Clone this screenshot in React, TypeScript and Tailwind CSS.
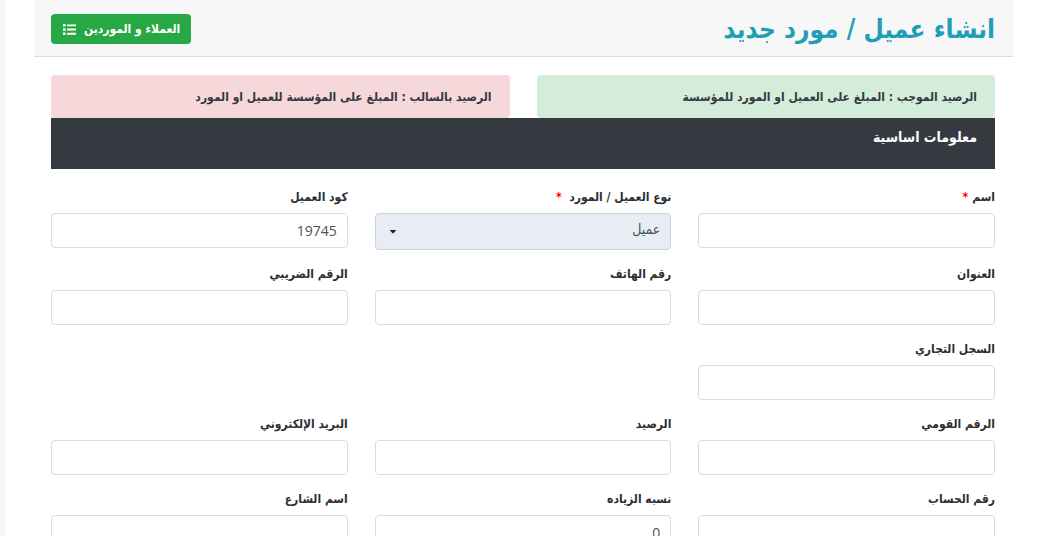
import React from 'react';

type Field = {
  id: string;
  label: string;
  required?: boolean;
  value?: string;
  options?: string[];
};

const rows: Field[][] = [
  [
    { id: 'name', label: 'اسم', required: true },
    { id: 'type', label: 'نوع العميل / المورد ', required: true, options: ['عميل'] },
    { id: 'code', label: 'كود العميل', value: '19745' },
  ],
  [
    { id: 'address', label: 'العنوان' },
    { id: 'phone', label: 'رقم الهاتف' },
    { id: 'tax', label: 'الرقم الضريبي' },
  ],
  [{ id: 'register', label: 'السجل التجاري' }],
  [
    { id: 'national', label: 'الرقم القومي' },
    { id: 'balance', label: 'الرصيد' },
    { id: 'email', label: 'البريد الإلكتروني' },
  ],
  [
    { id: 'account', label: 'رقم الحساب' },
    { id: 'increase', label: 'نسبه الزياده', value: '0' },
    { id: 'street', label: 'اسم الشارع' },
  ],
];

const ListIcon: React.FC = () => (
  <svg viewBox="0 0 13 11" className="h-[11px] w-[13px]" fill="currentColor">
    <rect x="0" y="0" width="2.6" height="2.6" rx="0.5" />
    <rect x="0" y="4.2" width="2.6" height="2.6" rx="0.5" />
    <rect x="0" y="8.4" width="2.6" height="2.6" rx="0.5" />
    <rect x="4" y="0.4" width="9" height="1.9" rx="0.4" />
    <rect x="4" y="4.6" width="9" height="1.9" rx="0.4" />
    <rect x="4" y="8.8" width="9" height="1.9" rx="0.4" />
  </svg>
);

const FormField: React.FC<{ field: Field }> = ({ field }) => (
  <div>
    <label
      htmlFor={field.id}
      className="flex h-6 items-center gap-1 mb-1 text-[12px] font-bold whitespace-pre text-[#2b2f33]"
    >
      <span>{field.label}</span>
      {field.required && <span className="text-[#f00]">*</span>}
    </label>
    {field.options ? (
      <div className="relative">
        <select
          id={field.id}
          className="block w-full h-[37px] appearance-none rounded border border-[#ced4da] bg-[#e8ecf3] px-[10px] pb-1 text-[14px] text-[#495057]"
        >
          {field.options.map((option) => (
            <option key={option}>{option}</option>
          ))}
        </select>
        <svg
          viewBox="0 0 8 4"
          className="pointer-events-none absolute left-[14px] top-[17px] h-1 w-2"
          fill="#212529"
        >
          <path d="M0.6 0h6.8L4 3.7z" />
        </svg>
      </div>
    ) : (
      <input
        id={field.id}
        type="text"
        defaultValue={field.value}
        className="block w-full h-[35px] rounded border border-[#d9dbdd] bg-white px-[10px] font-['Open_Sans','DejaVu_Sans',sans-serif] text-[14px] text-[#495057]"
      />
    )}
  </div>
);

export default function App() {
  return (
    <div dir="rtl" className="flex min-h-screen bg-white font-['DejaVu_Sans_Condensed','DejaVu_Sans',sans-serif]">
      <main className="flex-1 ps-[27px] pe-7">
        {/* Header */}
        <header className="flex h-[57px] items-center justify-between border-b border-[#dcdcdc] bg-[#f7f7f7] ps-[18px] pe-[17px] pt-[2px]">
          <h1 className="text-[26px] font-bold text-[#1f9fb6]">انشاء عميل / مورد جديد</h1>
          <a
            href="#customers"
            className="flex h-[30px] items-center gap-2 rounded bg-[#28a745] ps-[11px] pe-3 text-[12px] font-bold text-white"
          >
            <span>العملاء و الموردين</span>
            <ListIcon />
          </a>
        </header>

        <div className="ps-[18px] pe-[17px] pt-[18px]">
          {/* Balance notes */}
          <div className="grid grid-cols-2 gap-[27px] text-[12px] font-bold text-[#343a40]">
            <p className="flex h-[43px] items-center rounded bg-[#d4edda] px-[18px]">
              الرصيد الموجب : المبلغ على العميل او المورد للمؤسسة
            </p>
            <p className="flex h-[43px] items-center rounded bg-[#f6d7da] px-[18px]">
              الرصيد بالسالب : المبلغ على المؤسسة للعميل او المورد
            </p>
          </div>

          <h2 className="h-[51px] bg-[#343a40] px-[18px] pt-[7px] text-[14px] leading-6 font-bold text-white">
            معلومات اساسية
          </h2>

          {/* Basic information */}
          <form className="flex flex-col gap-3 pt-4">
            {rows.map((row) => (
              <div key={row[0].id} className="grid grid-cols-3 gap-[27px]">
                {row.map((field) => (
                  <FormField key={field.id} field={field} />
                ))}
              </div>
            ))}
          </form>
        </div>
      </main>
      <aside className="w-1.5 bg-[#f3f8fd]" />
    </div>
  );
}
